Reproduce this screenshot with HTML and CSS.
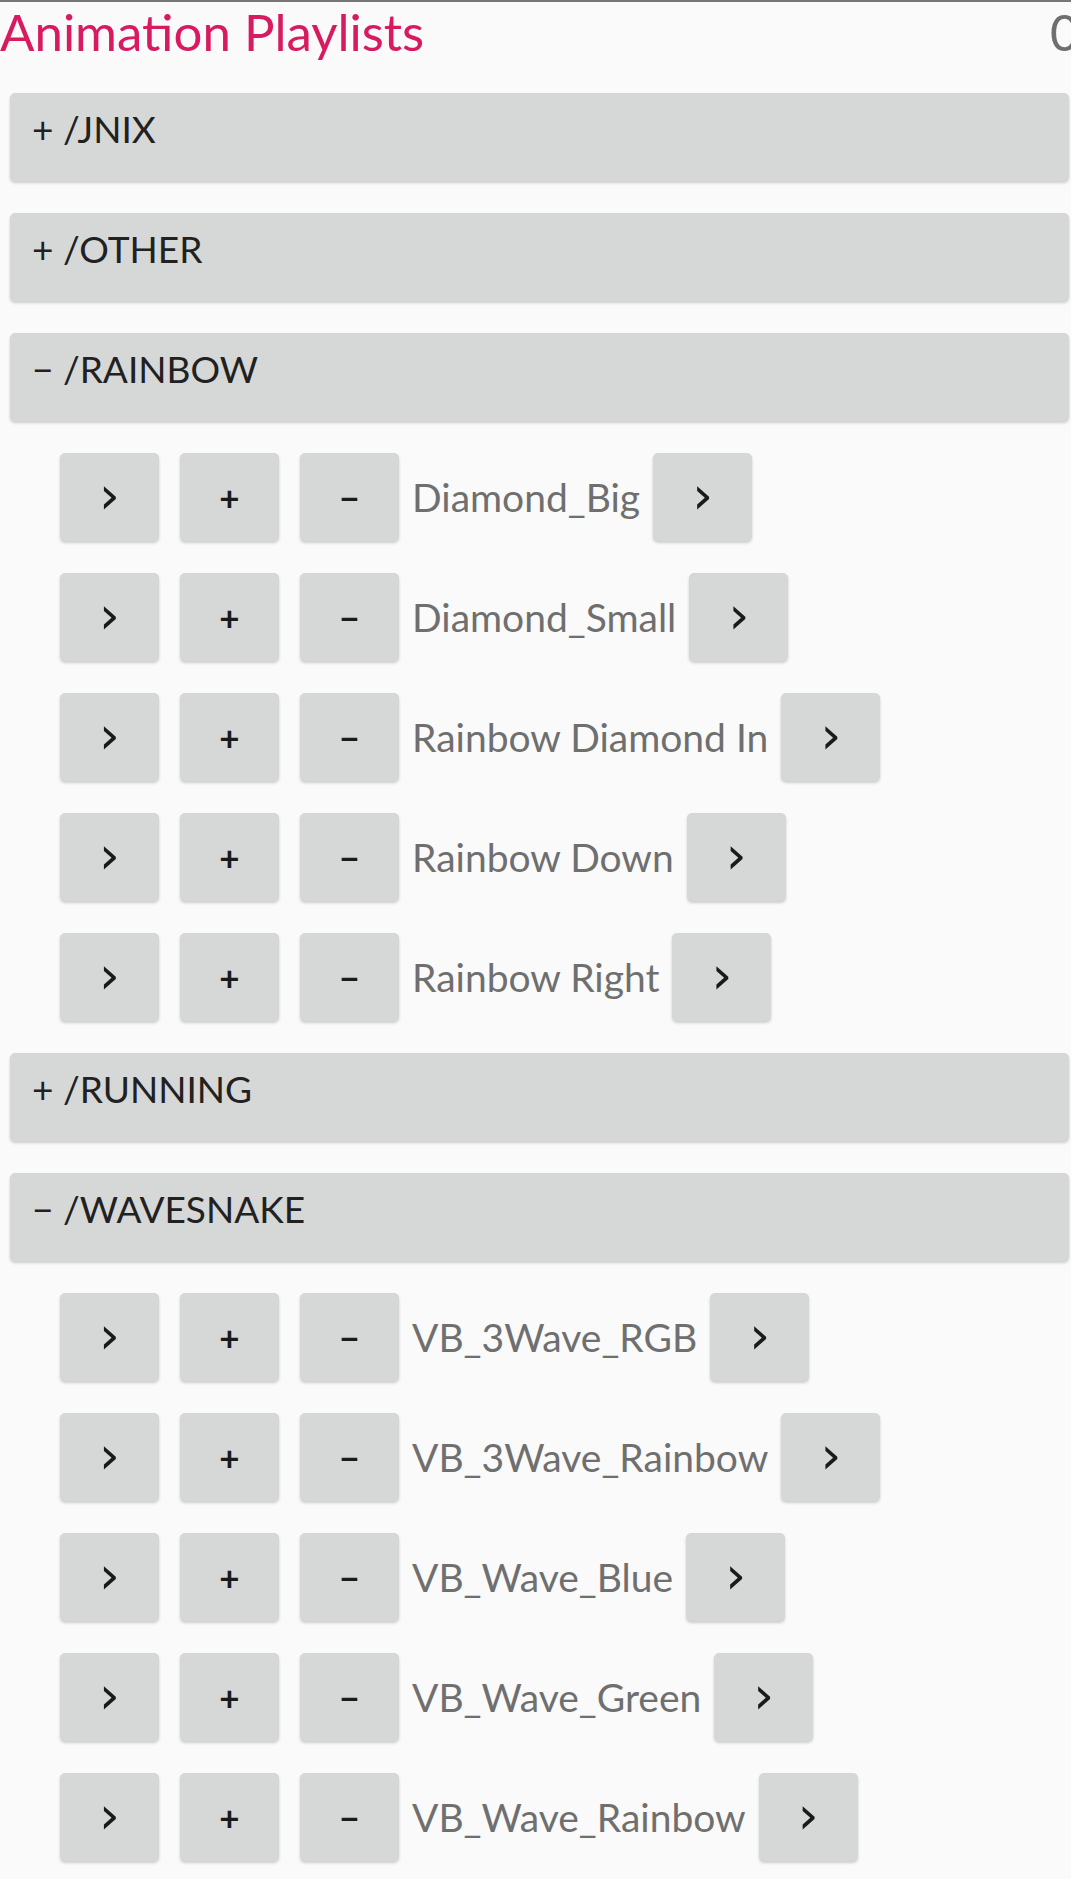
FILE: index.html
```html
<!DOCTYPE html>
<html lang="en">
<head>
<meta charset="UTF-8" />
<meta name="viewport" content="width=device-width, initial-scale=1" />
<title>Animation Playlists</title>
<link rel="stylesheet" href="styles.css">
</head>
<body>
<div class="status-line"></div>
<div class="title-row">
  <h1 class="title">Animation Playlists</h1>
  <span class="count">0</span>
</div>

<div class="folders">
  <div class="folder-bar">+ /JNIX</div>
  <div class="folder-bar">+ /OTHER</div>
  <div class="folder-bar">&minus; /RAINBOW</div>

  <!-- RAINBOW items -->
  <div class="anim-row">
    <button class="btn chev">&rsaquo;</button><button class="btn">+</button><button class="btn">&minus;</button>
    <span class="anim-name">Diamond_Big</span>
    <button class="btn chev">&rsaquo;</button>
  </div>
  <div class="anim-row">
    <button class="btn chev">&rsaquo;</button><button class="btn">+</button><button class="btn">&minus;</button>
    <span class="anim-name">Diamond_Small</span>
    <button class="btn chev">&rsaquo;</button>
  </div>
  <div class="anim-row">
    <button class="btn chev">&rsaquo;</button><button class="btn">+</button><button class="btn">&minus;</button>
    <span class="anim-name">Rainbow Diamond In</span>
    <button class="btn chev">&rsaquo;</button>
  </div>
  <div class="anim-row">
    <button class="btn chev">&rsaquo;</button><button class="btn">+</button><button class="btn">&minus;</button>
    <span class="anim-name">Rainbow Down</span>
    <button class="btn chev">&rsaquo;</button>
  </div>
  <div class="anim-row">
    <button class="btn chev">&rsaquo;</button><button class="btn">+</button><button class="btn">&minus;</button>
    <span class="anim-name">Rainbow Right</span>
    <button class="btn chev">&rsaquo;</button>
  </div>

  <div class="folder-bar">+ /RUNNING</div>
  <div class="folder-bar">&minus; /WAVESNAKE</div>

  <!-- WAVESNAKE items -->
  <div class="anim-row">
    <button class="btn chev">&rsaquo;</button><button class="btn">+</button><button class="btn">&minus;</button>
    <span class="anim-name">VB_3Wave_RGB</span>
    <button class="btn chev">&rsaquo;</button>
  </div>
  <div class="anim-row">
    <button class="btn chev">&rsaquo;</button><button class="btn">+</button><button class="btn">&minus;</button>
    <span class="anim-name">VB_3Wave_Rainbow</span>
    <button class="btn chev">&rsaquo;</button>
  </div>
  <div class="anim-row">
    <button class="btn chev">&rsaquo;</button><button class="btn">+</button><button class="btn">&minus;</button>
    <span class="anim-name">VB_Wave_Blue</span>
    <button class="btn chev">&rsaquo;</button>
  </div>
  <div class="anim-row">
    <button class="btn chev">&rsaquo;</button><button class="btn">+</button><button class="btn">&minus;</button>
    <span class="anim-name">VB_Wave_Green</span>
    <button class="btn chev">&rsaquo;</button>
  </div>
  <div class="anim-row">
    <button class="btn chev">&rsaquo;</button><button class="btn">+</button><button class="btn">&minus;</button>
    <span class="anim-name">VB_Wave_Rainbow</span>
    <button class="btn chev">&rsaquo;</button>
  </div>
</div>
</body>
</html>
```

FILE: styles.css
```css
html, body {
  margin: 0; padding: 0;
  background: #fafafa;
  overflow-x: hidden;
  font-family: Lato, "Noto Sans", sans-serif;
}
.status-line {
  height: 2px;
  background: #767676;
}
.title-row {
  display: flex;
  justify-content: space-between;
  align-items: flex-start;
  height: 76px;
  margin-right: -8px;
}
.title {
  margin: 0;
  font-size: 51px;
  font-weight: 400;
  line-height: 60px;
  color: #d81b60;
}
.count {
  font-size: 50px;
  line-height: 60px;
  color: #6f6f6f;
}
.folders {
  display: flex;
  flex-direction: column;
  gap: 32px;
  padding: 15px 2px 20px 10px;
}
.folder-bar {
  height: 88px;
  box-sizing: border-box;
  padding: 0 0 18px 22px;
  display: flex;
  align-items: center;
  background: #d6d7d7;
  border-radius: 5px;
  box-shadow: 0 2px 3px rgba(0,0,0,0.18);
  font-size: 37px;
  color: #212121;
}
.anim-row {
  display: flex;
  align-items: center;
  height: 88px;
  padding-left: 50px;
}
.btn {
  width: 99px;
  height: 88px;
  margin-right: 21px;
  border: none;
  border-radius: 5px;
  background: #d6d7d7;
  box-shadow: 0 2px 3px rgba(0,0,0,0.18);
  font-family: Lato, "Noto Sans", sans-serif;
  font-size: 35px;
  font-weight: 700;
  line-height: 1;
  color: #1a1a1a;
  padding: 0;
}
.btn.chev {
  font-family: "DejaVu Sans", sans-serif;
  font-size: 52px;
  font-weight: 400;
  padding-bottom: 5px;
}
.btn:nth-child(3) { margin-right: 13px; }
.anim-name {
  font-size: 39px;
  color: #6f6f6f;
  margin-right: 13px;
}
```
